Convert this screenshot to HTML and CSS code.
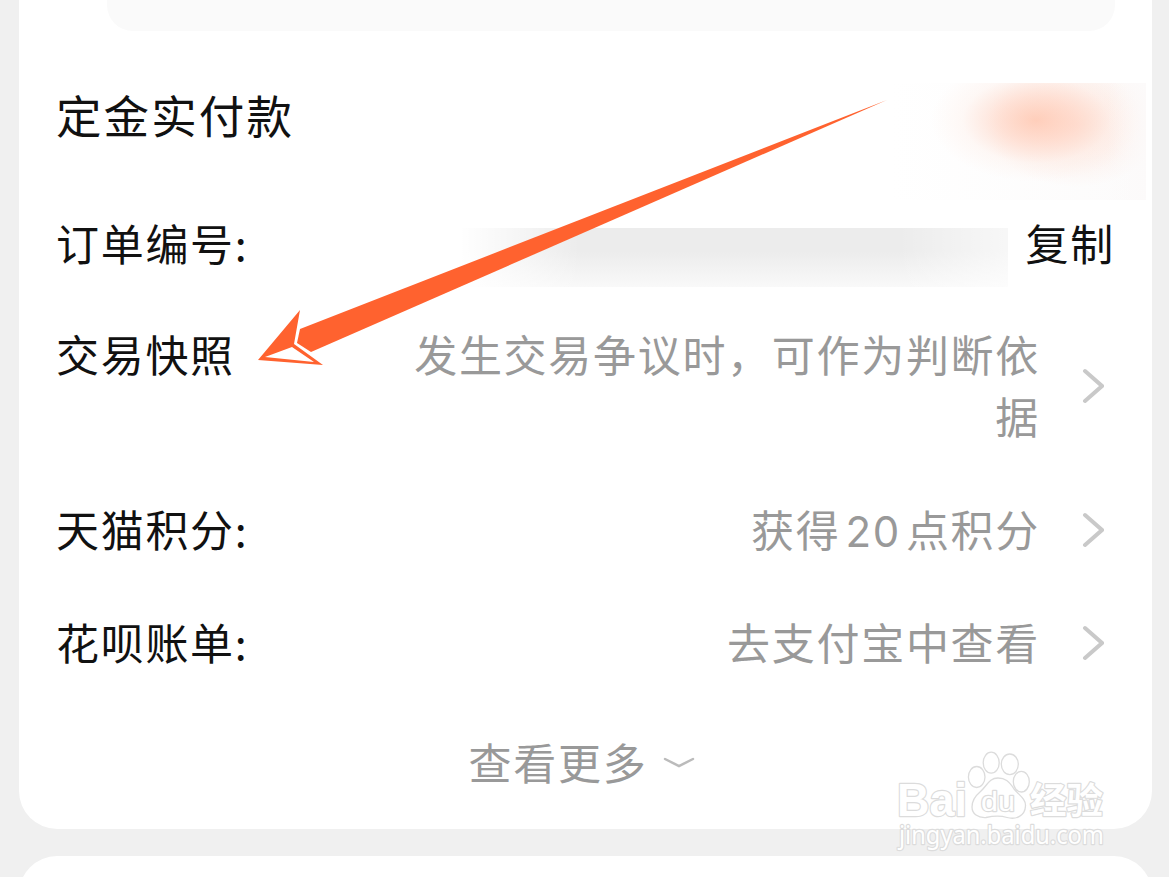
FILE: index.html
```html
<!DOCTYPE html>
<html lang="zh-CN">
<head>
    <meta charset="UTF-8">
    <meta name="viewport" content="width=device-width, initial-scale=1.0">
    <title>订单详情</title>
    <link rel="stylesheet" href="styles.css">
</head>
<body>
    <div class="card order-card">
        <div class="panel"></div>
        <div class="row row-paid">
            <span class="label">定金实付款</span>
            <span class="price-mask"></span>
        </div>
        <div class="row row-number">
            <span class="label">订单编号:</span>
            <span class="number-mask"></span>
            <span class="copy">复制</span>
        </div>
        <div class="row row-snapshot">
            <span class="label">交易快照</span>
            <span class="value">发生交易争议时，可作为判断依据</span>
            <svg class="chevron" viewBox="0 0 22 36"><path d="M3 3 20 18 3 33"/></svg>
        </div>
        <div class="row row-points">
            <span class="label">天猫积分:</span>
            <span class="value">获得<span class="num">20</span>点积分</span>
            <svg class="chevron" viewBox="0 0 22 36"><path d="M3 3 20 18 3 33"/></svg>
        </div>
        <div class="row row-bill">
            <span class="label">花呗账单:</span>
            <span class="value">去支付宝中查看</span>
            <svg class="chevron" viewBox="0 0 22 36"><path d="M3 3 20 18 3 33"/></svg>
        </div>
        <div class="more">
            <span>查看更多</span>
            <svg class="more-arrow" viewBox="0 0 32 12"><path d="M2 3 16 10 30 3"/></svg>
        </div>
    </div>
    <div class="card next-card"></div>

    <!-- arrow pointing at the snapshot row -->
    <svg class="pointer" viewBox="0 0 640 280">
        <path class="shaft" d="M636 1 L49 230 L46 244 L60 253Z"/>
        <path class="head" fill-rule="evenodd" d="M7 261 L49 211 L43 245 L72 266Z M14 258 L63 263 L41 248Z"/>
    </svg>

    <!-- watermark -->
    <svg class="watermark" viewBox="0 0 220 110">
        <text class="brand" x="7" y="66" textLength="70" lengthAdjust="spacingAndGlyphs">Bai</text>
        <ellipse cx="86.7" cy="27" rx="8.3" ry="10.5"/>
        <ellipse cx="101.2" cy="12.7" rx="8" ry="10.5"/>
        <ellipse cx="119.8" cy="14.3" rx="8.5" ry="10.3"/>
        <ellipse cx="131.3" cy="31.7" rx="8" ry="10.3"/>
        <path d="M108 28 C99 28 97 36 90 42 C84 47 82 52 82 57 C82 64 88 68 96 67.5 C103 66 112 66 117 67.5 C126 70 135 66 135.5 56 C136 49 129 45 124 39 C119 31 115 28 108 28Z"/>
        <text class="du" x="91" y="61" textLength="34" lengthAdjust="spacingAndGlyphs">du</text>
        <text class="cn" x="140" y="64" textLength="73" lengthAdjust="spacingAndGlyphs">经验</text>
        <text class="url" x="9" y="94" textLength="205" lengthAdjust="spacingAndGlyphs">jingyan.baidu.com</text>
    </svg>
</body>
</html>
```
FILE: styles.css
```css
* {
    box-sizing: border-box;
}
body {
    margin: 0;
    height: 877px;
    overflow: hidden;
    position: relative;
    background-color: #f0f0f0;
    font-family: 'Noto Sans CJK SC', sans-serif;
    color: #111;
}
.card {
    width: 1133px;
    margin-left: 19px;
    background-color: #fff;
}
.order-card {
    height: 829px;
    border-radius: 0 0 38px 38px;
}
.next-card {
    height: 60px;
    margin-top: 27px;
    border-radius: 38px 38px 0 0;
}
.panel {
    width: 1008px;
    height: 31px;
    margin-left: 88px;
    background-color: #fafafa;
    border-radius: 0 0 26px 26px;
}
.row {
    display: flex;
    align-items: flex-start;
    height: 62px;
    padding: 0 48px 0 37px;
    font-size: 43px;
    line-height: 62px;
    letter-spacing: 1.7px;
}
.label {
    flex: none;
    white-space: nowrap;
}
.row-paid {
    height: 117px;
    margin-top: 52px;
    padding-right: 6px;
    justify-content: space-between;
    font-size: 45.5px;
    letter-spacing: 2.1px;
}
.price-mask {
    width: 255px;
    height: 117px;
    background:
        linear-gradient(90deg, rgba(255, 255, 255, 0) 85%, rgba(252, 250, 250, 0.8)),
        radial-gradient(ellipse 105px 62px at 145px 37px, rgba(255, 200, 178, 0.85), rgba(255, 208, 190, 0.6) 35%, rgba(255, 230, 220, 0.25) 70%, rgba(255, 255, 255, 0)),
        radial-gradient(ellipse 90px 62px at 185px 42px, rgba(255, 215, 200, 0.55), rgba(255, 255, 255, 0)),
        linear-gradient(90deg, #fff, #fcfbfb);
}
.row-number {
    height: 73px;
    margin-top: 11px;
    padding-right: 37px;
}
.number-mask {
    flex: 1;
    height: 59px;
    margin: 17px 18px 0 212px;
    background: linear-gradient(90deg, #fff 0, rgba(255, 255, 255, 0) 120px, rgba(255, 255, 255, 0) 80%, rgba(255, 255, 255, 0.6)), linear-gradient(#ececec, #ececec 40%, #f9f9f9);
}
.value {
    width: 640px;
    margin-left: auto;
    color: #999;
    text-align: right;
}
.num {
    margin: 0 5px;
    font-family: Inter, sans-serif;
    font-size: 42px;
    line-height: 1;
}
.chevron {
    flex: none;
    width: 22px;
    height: 36px;
    margin-left: 42px;
    align-self: center;
    position: relative;
    top: 2px;
    fill: none;
    stroke: #c9c9c9;
    stroke-width: 4;
    stroke-linecap: round;
}
.row-snapshot {
    height: 124px;
    margin-top: 38px;
}
.row-points {
    margin-top: 51px;
}
.row-bill {
    margin-top: 51px;
}
.more {
    display: flex;
    justify-content: center;
    align-items: center;
    gap: 16px;
    margin-top: 58px;
    padding-right: 7px;
    font-size: 43px;
    line-height: 62px;
    letter-spacing: 1.7px;
    color: #999;
}
.more-arrow {
    width: 32px;
    height: 12px;
    margin-top: 2px;
    fill: none;
    stroke: #bbb;
    stroke-width: 2.5;
    stroke-linecap: round;
}
.pointer {
    position: absolute;
    left: 251px;
    top: 99px;
    width: 640px;
    height: 280px;
}
.shaft,
.head {
    fill: #ff622f;
}
.watermark {
    position: absolute;
    left: 890px;
    top: 750px;
    width: 220px;
    height: 110px;
    overflow: visible;
    fill: #fff;
    stroke: #dcdcdc;
    stroke-width: 1.3;
}
.watermark text {
    paint-order: stroke;
    stroke-width: 2.4;
    stroke-linejoin: round;
}
.brand {
    font: bold 47px 'Liberation Sans', sans-serif;
}
.du {
    font: 28px 'Liberation Sans', sans-serif;
}
.cn {
    font: bold 36px 'Noto Sans CJK SC', sans-serif;
}
.url {
    font: 25px 'Noto Sans', sans-serif;
}
```
